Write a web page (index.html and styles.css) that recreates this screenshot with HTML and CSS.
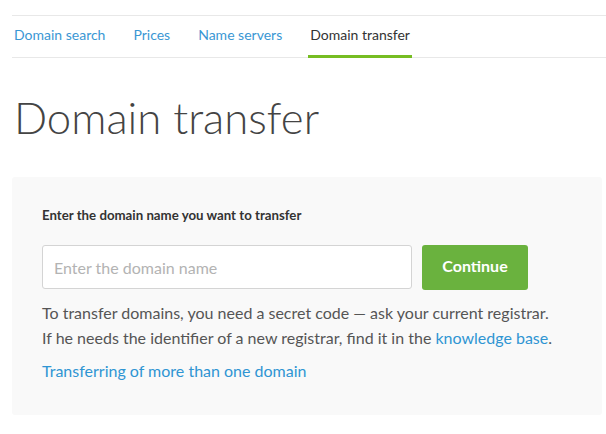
FILE: index.html
```html
<!DOCTYPE html>
<html>
<head>
<meta charset="utf-8">
<link rel="stylesheet" href="styles.css">
</head>
<body>
<div class="page">
  <nav class="tabs">
    <a class="tab" href="#">Domain search</a>
    <a class="tab" href="#">Prices</a>
    <a class="tab" href="#">Name servers</a>
    <a class="tab active" href="#">Domain transfer</a>
  </nav>
  <h1 class="title">Domain transfer</h1>
  <section class="box">
    <label class="label" for="dom">Enter the domain name you want to transfer</label>
    <div class="form-row">
      <input class="input" id="dom" type="text" placeholder="Enter the domain name">
      <button class="btn" type="button">Continue</button>
    </div>
    <p class="info">To transfer domains, you need a secret code — ask your current registrar.<br>If he needs the identifier of a new registrar, find it in the <a class="link" href="#">knowledge base</a>.</p>
    <a class="link more" href="#">Transferring of more than one domain</a>
  </section>
</div>
</body>
</html>
```

FILE: styles.css
```css
html, body {
  margin: 0;
  padding: 0;
  background: #fff;
  overflow: hidden;
}
body {
  font-family: Lato, "Open Sans", sans-serif;
  color: #555;
}
.page {
  padding: 15px 0 0 12px;
}
.tabs {
  display: flex;
  gap: 24px;
  border-top: 1px solid #e8e8e8;
  border-bottom: 1px solid #e8e8e8;
  height: 41px;
  align-items: stretch;
}
.tab {
  display: flex;
  align-items: center;
  padding: 0 2px 2px 2px;
  font-size: 14px;
  color: #3a97d4;
  text-decoration: none;
  border-bottom: 3px solid transparent;
  margin-bottom: -1px;
}
.tab.active {
  color: #333;
  border-bottom-color: #76bd22;
}
.title {
  margin: 31px 0 0 2px;
  font-weight: 300;
  font-size: 43.7px;
  line-height: 56px;
  color: #444;
}
.box {
  margin: 32px 4px 0 0;
  background: #f9f9f9;
  border-radius: 3px;
  padding: 30px 30px 32px 30px;
  display: flex;
  flex-direction: column;
  align-items: flex-start;
}
.label {
  font-size: 13.25px;
  font-weight: 700;
  color: #333;
  line-height: 16px;
}
.form-row {
  display: flex;
  gap: 10px;
  margin-top: 22px;
}
.input {
  box-sizing: border-box;
  width: 370px;
  height: 44px;
  border: 1px solid #d4d4d4;
  border-radius: 3px;
  background: #fff;
  padding: 0 11px;
  font-family: inherit;
  font-size: 16px;
  color: #333;
  outline: none;
}
.input::placeholder {
  color: #b3b3b3;
}
.btn {
  width: 106px;
  height: 45px;
  border: none;
  border-radius: 3px;
  background: #6ab23e;
  color: #fff;
  font-family: inherit;
  font-weight: 700;
  font-size: 16px;
  padding: 0 0 4px 0;
}
.info {
  margin: 10px 0 0 0;
  font-size: 16px;
  line-height: 25px;
}
.link {
  color: #2f95d3;
  text-decoration: none;
}
.more {
  font-size: 16px;
  margin-top: 8px;
  line-height: 25px;
}
```
